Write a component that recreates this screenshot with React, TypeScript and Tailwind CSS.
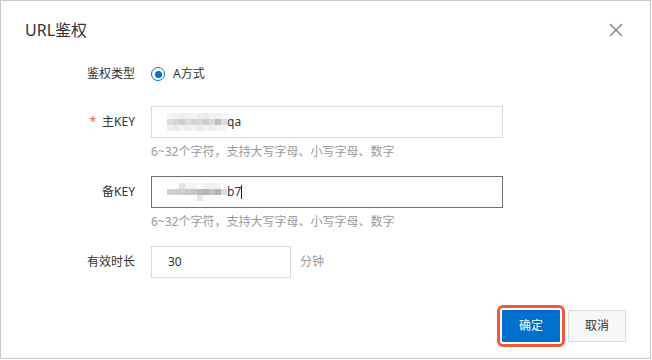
import type { ReactNode } from 'react'

// URL鉴权 dialog — static recreation

const FONT = '"Noto Sans", "Noto Sans CJK SC", sans-serif'

// blurred (mosaic) part of the key values
const MAIN_KEY_MOSAIC = [
  ['#f4f4f4', '#f2f2f2', '#eeeeee', '#f0f0f0', '#f5f5f5', '#eeeeee', '#ececec', '#f0f0f0', '#f3f3f3', '#f6f6f6'],
  ['#dddddd', '#d6d6d6', '#cfccc2', '#dadada', '#d3d3d3', '#d8d8d8', '#cdcdcd', '#d9d9d9', '#c4bcc2', '#dcdcdc'],
  ['#f0f0f0', '#ececec', '#f2f2f2', '#eeeeee', '#f4f4f4', '#ebebeb', '#f1f1f1', '#eeeeee', '#f3f3f3', '#f5f5f5'],
]

const BACKUP_KEY_MOSAIC = [
  ['#ffffff', '#ffffff', '#e2e2e2', '#f4f4f4', '#f2f4f6', '#ffffff', '#f2f2f2', '#f0f0f0', '#f4f4f4', '#ffffff'],
  ['#d2d2d2', '#cdcdcd', '#d2cec8', '#c4ccd2', '#c8c4cc', '#bcbcbc', '#b6b6b6', '#c2c2c2', '#bab2ba', '#dddddd'],
  ['#ffffff', '#ffffff', '#ffffff', '#ffffff', '#ffffff', '#e6e6e6', '#ffffff', '#ffffff', '#ffffff', '#ffffff'],
]

function Mosaic({ rows }: { rows: string[][] }) {
  return (
    <span className="flex flex-col">
      {rows.map((row, i) => (
        <span key={i} className="flex">
          {row.map((c, j) => (
            <span key={j} className="block w-[6px] h-[6px]" style={{ backgroundColor: c }} />
          ))}
        </span>
      ))}
    </span>
  )
}

function Label({ children, required = false }: { children: ReactNode; required?: boolean }) {
  return (
    <div className="flex items-center justify-end h-[32px] text-[12px] text-[#333]">
      {required && <span className="text-[#f0602a] mr-[6px]">*</span>}
      {children}
    </div>
  )
}

function Hint() {
  return (
    <div className="mt-[4px] h-[20px] leading-[20px] text-[12px] text-[#999]">
      6~32个字符，支持大写字母、小写字母、数字
    </div>
  )
}

export default function App() {
  return (
    <div
      className="w-[651px] h-[359px] border border-[#c8c8c8] bg-white flex flex-col"
      style={{ fontFamily: FONT }}
    >
      {/* Header */}
      <div className="flex items-center justify-between pl-[24px] pr-[26px] pt-[17px]">
        <h1 className="text-[16px] leading-[24px] text-[#333]">URL鉴权</h1>
        <button className="w-[16px] h-[16px] flex items-center justify-center" aria-label="关闭">
          <svg width="14" height="14" viewBox="0 0 14 14" fill="none" stroke="#888" strokeWidth="1.5">
            <path d="M1 1 L13 13 M13 1 L1 13" />
          </svg>
        </button>
      </div>

      {/* Form */}
      <div className="grid grid-cols-[109px_1fr] gap-x-[16px] pl-[25px] mt-[16px]">
        <Label>鉴权类型</Label>
        <div className="flex items-center h-[32px] text-[12px] text-[#333]">
          <span className="w-[14px] h-[14px] rounded-full border-[1.5px] border-[#0070cc] flex items-center justify-center">
            <span className="w-[7px] h-[7px] rounded-full bg-[#0070cc]" />
          </span>
          <span className="ml-[8px]">A方式</span>
        </div>

        <div className="mt-[16px]">
          <Label required>主KEY</Label>
        </div>
        <div className="mt-[16px]">
          <div className="w-[352px] h-[32px] border border-[#dadada] flex items-center pl-[15px] text-[12px] text-[#333]">
            <Mosaic rows={MAIN_KEY_MOSAIC} />
            <span>qa</span>
          </div>
          <Hint />
        </div>

        <div className="mt-[14px]">
          <Label>备KEY</Label>
        </div>
        <div className="mt-[14px]">
          <div className="w-[352px] h-[32px] border border-[#707070] flex items-center pl-[15px] text-[12px] text-[#333]">
            <Mosaic rows={BACKUP_KEY_MOSAIC} />
            <span>b7</span>
            <span className="w-px h-[14px] bg-[#222]" />
          </div>
          <Hint />
        </div>

        <div className="mt-[14px]">
          <Label>有效时长</Label>
        </div>
        <div className="mt-[14px] flex items-center">
          <div className="w-[140px] h-[32px] border border-[#dadada] flex items-center pl-[16px] text-[12px] text-[#333]">
            30
          </div>
          <span className="ml-[9px] text-[12px] text-[#999]">分钟</span>
        </div>
      </div>

      {/* Footer */}
      <div className="flex justify-end gap-[8px] pr-[24px] mt-[32px]">
        <button className="w-[58px] h-[32px] bg-[#0070cc] text-white text-[12px] outline-[3px] outline-solid outline-[#f05a3c] outline-offset-2 rounded-[1px]">
          确定
        </button>
        <button className="w-[58px] h-[32px] bg-[#f7f7f7] border border-[#dcdcdc] text-[#333] text-[12px]">
          取消
        </button>
      </div>
    </div>
  )
}
